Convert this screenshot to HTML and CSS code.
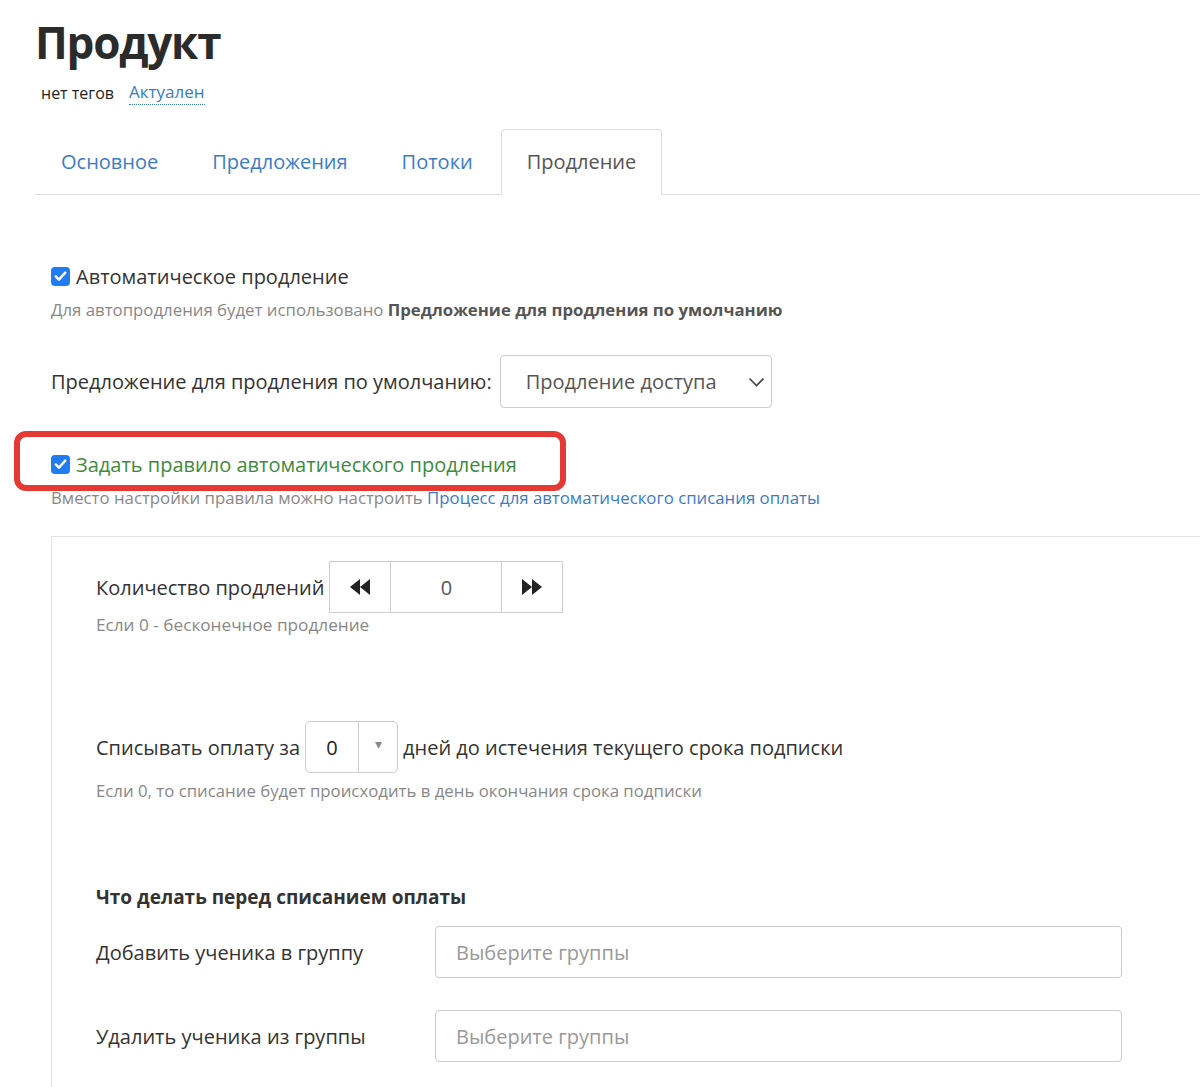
FILE: index.html
```html
<!DOCTYPE html>
<html lang="ru">
<head>
    <meta charset="UTF-8">
    <meta name="viewport" content="width=device-width, initial-scale=1.0">
    <title>Продукт</title>
    <link rel="stylesheet" href="styles.css">
</head>
<body>
    <div class="page">
        <h1 class="page-title">Продукт</h1>
        <div class="tags-line">
            <span class="no-tags">нет тегов</span>
            <a class="status-link" href="#">Актуален</a>
        </div>

        <ul class="tabs">
            <li class="tab"><a href="#">Основное</a></li>
            <li class="tab"><a href="#">Предложения</a></li>
            <li class="tab"><a href="#">Потоки</a></li>
            <li class="tab active"><a href="#">Продление</a></li>
        </ul>

        <div class="tab-content">
            <label class="check-row">
                <span class="checkbox">
                    <svg viewBox="0 0 20 20" width="20" height="20"><path d="M5 10.5l3.3 3.3L15 6.5" fill="none" stroke="#fff" stroke-width="2.6" stroke-linecap="round" stroke-linejoin="round"/></svg>
                </span>
                <span class="check-label">Автоматическое продление</span>
            </label>
            <div class="help">Для автопродления будет использовано <b>Предложение для продления по умолчанию</b></div>

            <div class="select-row">
                <span class="field-label">Предложение для продления по умолчанию:</span>
                <div class="select-box">
                    <span>Продление доступа</span>
                    <svg viewBox="0 0 16 10" width="17" height="10"><path d="M1 1.5l7 7 7-7" fill="none" stroke="#444" stroke-width="1.6"/></svg>
                </div>
            </div>

            <div class="rule-block">
                <label class="check-row">
                    <span class="checkbox">
                        <svg viewBox="0 0 20 20" width="20" height="20"><path d="M5 10.5l3.3 3.3L15 6.5" fill="none" stroke="#fff" stroke-width="2.6" stroke-linecap="round" stroke-linejoin="round"/></svg>
                    </span>
                    <span class="check-label green">Задать правило автоматического продления</span>
                </label>
                <div class="help">Вместо настройки правила можно настроить <a href="#">Процесс для автоматического списания оплаты</a></div>
                <div class="highlight"></div>
            </div>

            <div class="rule-panel">
                <div class="inline-row">
                    <span class="field-label">Количество продлений</span>
                    <div class="stepper">
                        <span class="step-btn">
                            <svg viewBox="0 0 22 18" width="22" height="18"><path d="M11 1L1 9l10 8zM21 1L11 9l10 8z" fill="#222"/></svg>
                        </span>
                        <span class="step-value">0</span>
                        <span class="step-btn">
                            <svg viewBox="0 0 22 18" width="22" height="18"><path d="M1 1l10 8-10 8zM11 1l10 8-10 8z" fill="#222"/></svg>
                        </span>
                    </div>
                </div>
                <div class="help help-tight">Если 0 - бесконечное продление</div>

                <div class="inline-row days-row">
                    <span class="field-label">Списывать оплату за</span>
                    <div class="num-select">
                        <span class="num-value">0</span>
                        <span class="num-arrow">▾</span>
                    </div>
                    <span class="field-label">дней до истечения текущего срока подписки</span>
                </div>
                <div class="help days-help">Если 0, то списание будет происходить в день окончания срока подписки</div>

                <h3 class="panel-heading">Что делать перед списанием оплаты</h3>
                <div class="group-row">
                    <span class="field-label">Добавить ученика в группу</span>
                    <div class="group-input">Выберите группы</div>
                </div>
                <div class="group-row">
                    <span class="field-label">Удалить ученика из группы</span>
                    <div class="group-input">Выберите группы</div>
                </div>
            </div>
        </div>
    </div>
</body>
</html>
```

FILE: styles.css
```css
/* Общие стили */
html, body {
    margin: 0;
    padding: 0;
    overflow: hidden;
}

body {
    font-family: "Open Sans", "Noto Sans", sans-serif;
    color: #333;
    background-color: #fff;
}

a {
    color: #3a7cc3;
    text-decoration: none;
}

.page {
    padding-left: 35px;
}

/* Заголовок */
.page-title {
    margin: 0;
    padding-top: 16px;
    font-size: 44px;
    line-height: 52px;
    font-weight: 700;
    color: #2b2b2b;
    letter-spacing: -1.2px;
}

.tags-line {
    display: flex;
    align-items: center;
    gap: 15px;
    margin-top: 12px;
    padding-left: 6px;
    font-size: 16px;
    line-height: 24px;
}

.no-tags {
    color: #222;
}

.status-link {
    font-size: 17px;
    border-bottom: 1px dotted #3a7cc3;
}

/* Вкладки */
.tabs {
    list-style: none;
    margin: 24px 0 0;
    padding: 0;
    display: flex;
    border-bottom: 1px solid #ddd;
}

.tab {
    margin-right: 2px;
    margin-bottom: -1px;
}

.tab a {
    display: block;
    padding: 0 25px;
    height: 64px;
    line-height: 64px;
    font-size: 20px;
    border: 1px solid transparent;
    border-radius: 4px 4px 0 0;
}

.tab.active a {
    color: #555;
    background-color: #fff;
    border-color: #ddd;
    border-bottom-color: #fff;
}

/* Содержимое вкладки */
.tab-content {
    padding-left: 16px;
    padding-top: 67px;
}

.check-row {
    display: flex;
    align-items: center;
    gap: 6px;
    height: 28px;
}

.checkbox {
    width: 19px;
    height: 19px;
    border-radius: 4px;
    background-color: #1f7cf2;
    display: flex;
    align-items: center;
    justify-content: center;
}

.check-label {
    font-size: 20px;
    color: #333;
}

.check-label.green {
    color: #3d8b3d;
}

.help {
    font-size: 16.8px;
    color: #888;
    line-height: 22px;
    margin-top: 9px;
}

.help b {
    color: #555;
}

.help-tight {
    margin-top: 1px;
    font-size: 17.2px;
}

.days-help {
    margin-top: 7px;
}

.field-label {
    font-size: 20px;
    color: #333;
    white-space: nowrap;
}

.select-row {
    display: flex;
    align-items: center;
    gap: 8px;
    margin-top: 34px;
}

.select-box {
    width: 272px;
    height: 53px;
    box-sizing: border-box;
    border: 1px solid #ccc;
    border-radius: 4px;
    display: flex;
    align-items: center;
    justify-content: space-between;
    padding: 0 6px 0 25px;
    font-size: 20px;
    color: #555;
}

/* Блок с правилом и красной рамкой */
.rule-block {
    position: relative;
    margin-top: 42px;
}

.highlight {
    position: absolute;
    left: -37px;
    top: -19px;
    width: 540px;
    height: 48px;
    border: 6px solid #e53a33;
    border-radius: 12px;
}

/* Панель правила */
.rule-panel {
    margin-top: 27px;
    margin-right: -20px;
    border: 1px solid #e2e2e2;
    padding: 24px 0 40px 44px;
    min-height: 600px;
}

.inline-row {
    display: flex;
    align-items: center;
    gap: 5px;
}

.stepper {
    display: flex;
    height: 50px;
    border: 1px solid #ccc;
}

.step-btn {
    width: 60px;
    display: flex;
    align-items: center;
    justify-content: center;
}

.step-value {
    width: 110px;
    border-left: 1px solid #ccc;
    border-right: 1px solid #ccc;
    display: flex;
    align-items: center;
    justify-content: center;
    font-size: 20px;
    color: #555;
}

.days-row {
    margin-top: 85px;
}

.num-select {
    display: flex;
    height: 52px;
    width: 93px;
    box-sizing: border-box;
    border: 1px solid #ccc;
    border-radius: 5px;
}

.num-value {
    width: 52px;
    border-right: 1px solid #ccc;
    display: flex;
    align-items: center;
    justify-content: center;
    font-size: 20px;
    color: #222;
}

.num-arrow {
    flex: 1;
    display: flex;
    align-items: center;
    justify-content: center;
    font-size: 14px;
    color: #888;
    padding-bottom: 8px;
}

.panel-heading {
    margin: 83px 0 0;
    font-size: 19px;
    font-weight: 700;
    color: #333;
    line-height: 24px;
}

.group-row {
    display: flex;
    align-items: center;
    margin-top: 17px;
}

.group-row .field-label {
    width: 339px;
}

.group-input {
    width: 687px;
    height: 52px;
    box-sizing: border-box;
    border: 1px solid #ccc;
    border-radius: 4px;
    display: flex;
    align-items: center;
    padding-left: 20px;
    font-size: 20px;
    color: #999;
}

.group-row + .group-row {
    margin-top: 32px;
}
```
